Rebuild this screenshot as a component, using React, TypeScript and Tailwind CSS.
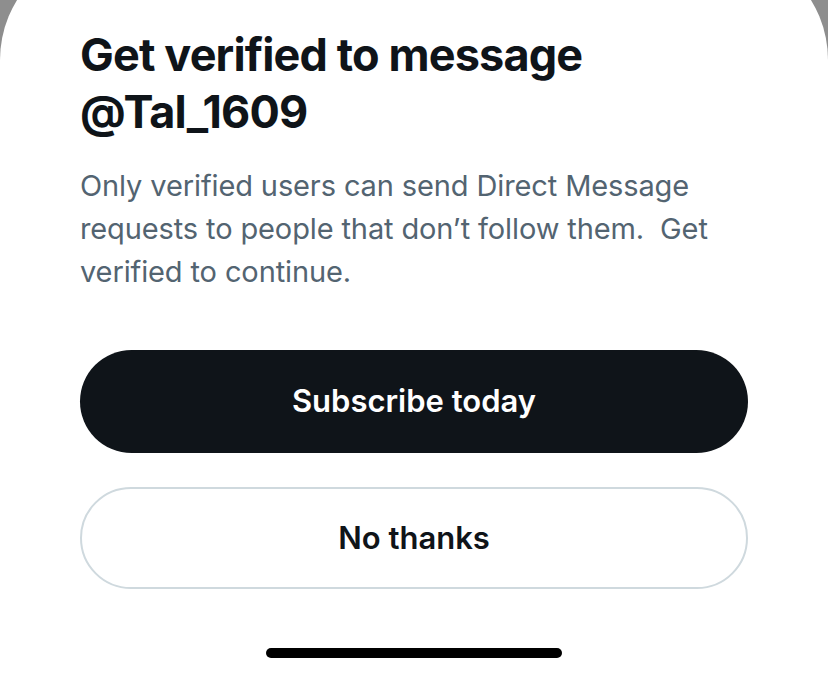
import React from "react";

export default function App() {
  return (
    <div className="w-[828px] h-[673px] bg-[#8e8e8e] overflow-hidden">
      <div className="-mt-[54px] h-[727px] bg-white rounded-t-[114px] flex flex-col px-[80px] pt-[80px]" style={{ fontFamily: "Inter, 'Noto Sans', sans-serif" }}>
        <h1 className="text-[45px] leading-[57px] font-bold text-[#0f1419] tracking-[-0.85px]">
          Get verified to message
          <br />
          @Tal_1609
        </h1>
        <p className="mt-[24px] text-[29px] leading-[43px] text-[#536471] tracking-[-0.12px]">
          Only verified users can send Direct Message requests to people that don’t follow them.&nbsp; Get verified to continue.
        </p>
        <button className="mt-[57px] h-[103px] w-full rounded-full bg-[#0f1419] text-white text-[31px] font-semibold flex items-center justify-center">
          Subscribe today
        </button>
        <button className="mt-[34px] h-[102px] w-full rounded-full border-2 border-[#cfd9de] bg-white text-[#0f1419] text-[31px] font-semibold flex items-center justify-center">
          No thanks
        </button>
        <div className="mt-[59px] flex justify-center">
          <div className="w-[296px] h-[10px] rounded-full bg-black" />
        </div>
      </div>
    </div>
  );
}
